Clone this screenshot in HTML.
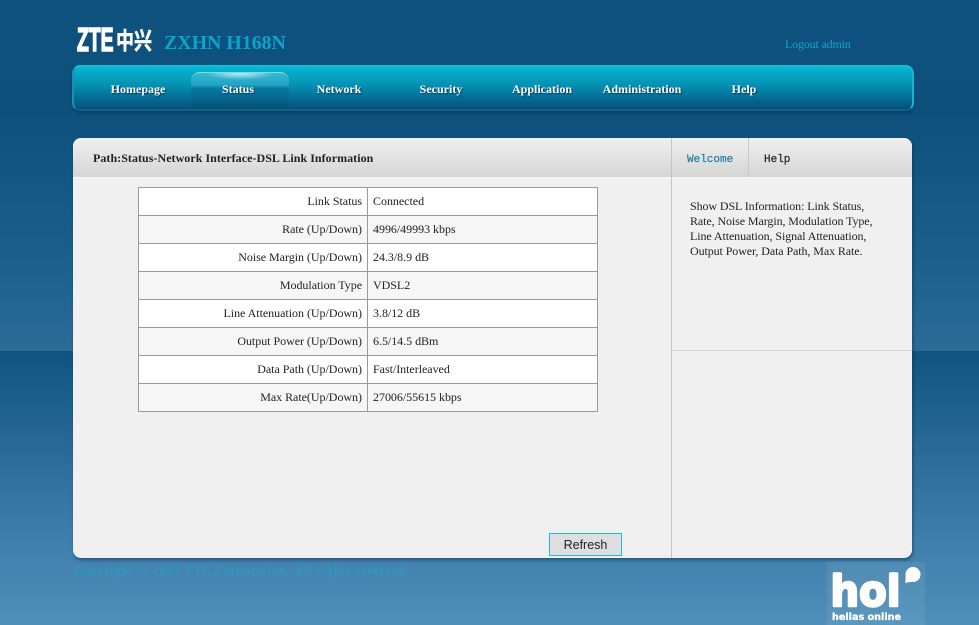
<!DOCTYPE html>
<html><head><meta charset="utf-8"><title>ZXHN H168N</title>
<style>
html,body{margin:0;padding:0}
body{width:979px;height:625px;overflow:hidden;position:relative;font-family:"Liberation Serif",serif;background:#0f5380}
.a{position:absolute}
#bg1{left:0;top:0;width:979px;height:351px;background:linear-gradient(#0f527f 0,#0e507c 110px,#1a5e8b 250px,#2b6c97 350px)}
#bg2{left:0;top:351px;width:979px;height:274px;background:linear-gradient(#0f5481 0,#2a6a97 100px,#3f7fab 190px,#4f8eb9 274px)}
#nav{left:72px;top:65px;width:838px;height:42px;border:2px solid #12b6d5;border-bottom:2px solid #11618c;border-left-color:#1592b4;border-top-color:#0cc0da;border-radius:8px;background:linear-gradient(#06b6d2 0,#0590b2 18px,#056a95 32px,#05507c 42px);box-shadow:0 2px 3px rgba(4,45,75,.55)}
#act{left:191px;top:72px;width:98px;height:36px;border-radius:9px 9px 0 0;background:radial-gradient(ellipse 34px 7px at 50% 0,#c4eff6 0,rgba(130,220,235,0) 100%),linear-gradient(#38b8d2 0,#22a4c2 12px,#067ca1 15px,#054f7a 36px);border-top:1px solid #7fd8e8;box-sizing:border-box}
.m{top:81px;color:#fff;font-weight:bold;font-size:12px;line-height:16px;text-align:center;text-shadow:1px 1px 1px #033a58;white-space:nowrap}
#panel{left:73px;top:138px;width:839px;height:420px;background:#f0f0f0;border-radius:8px;box-shadow:1px 2px 3px rgba(5,40,70,.5);overflow:hidden}
#hd{left:0;top:0;width:839px;height:39px;background:linear-gradient(#f0f0f0,#d5d5d5)}
table{position:absolute;left:138px;top:187px;width:460px;height:225px;border-collapse:collapse;font-size:12px;color:#222;table-layout:fixed;letter-spacing:-.03px}
td{border:1px solid #9a9a9a;padding:0 5px 2px;height:25px;line-height:14px}
td:first-child{text-align:right;width:218px}
tr:nth-child(odd) td{background:#fff}
tr:nth-child(even) td{background:#f6f6f6}
</style></head><body>
<div class="a" id="bg1"></div><div class="a" id="bg2"></div>

<div class="a" style="left:77px;top:21px;width:62px;font:bold 33px/38px 'Liberation Sans',sans-serif;color:#fff;-webkit-text-stroke:1.6px #fff;transform:scaleX(.585);transform-origin:0 0;white-space:nowrap">ZTE</div>
<div class="a" style="left:116px;top:26px;font:bold 18px/28px 'Noto Sans CJK SC',sans-serif;color:#fff;-webkit-text-stroke:.4px #fff;transform:scaleY(1.3);white-space:nowrap">中兴</div>
<div class="a" style="left:164px;top:31px;font:bold 20px/24px 'Liberation Serif',serif;color:#0aa5c9;letter-spacing:-.1px;white-space:nowrap">ZXHN H168N</div>
<div class="a" style="left:785px;top:36px;font-size:12px;line-height:16px;color:#12a5c8;letter-spacing:-.17px;white-space:nowrap">Logout admin</div>

<div class="a" id="nav"></div>
<div class="a" id="act"></div>
<div class="a m" style="left:88px;width:100px">Homepage</div>
<div class="a m" style="left:188px;width:100px">Status</div>
<div class="a m" style="left:289px;width:100px">Network</div>
<div class="a m" style="left:391px;width:100px">Security</div>
<div class="a m" style="left:492px;width:100px">Application</div>
<div class="a m" style="left:592px;width:100px">Administration</div>
<div class="a m" style="left:694px;width:100px">Help</div>

<div class="a" id="panel">
  <div class="a" id="hd"></div>
  <div class="a" style="left:0;top:39px;width:839px;height:1px;background:#f7f7f7"></div>
  <div class="a" style="left:598px;top:0;width:1px;height:420px;background:#c4c4c4"></div>
  <div class="a" style="left:675px;top:0;width:1px;height:39px;background:#c9c9c9"></div>
  <div class="a" style="left:599px;top:212px;width:240px;height:1px;background:#d6d6d6"></div>
</div>
<div class="a" style="left:93px;top:150px;font-weight:bold;font-size:12px;line-height:16px;color:#222;white-space:nowrap;letter-spacing:.04px">Path:Status-Network Interface-DSL Link Information</div>
<div class="a" style="left:687px;top:151px;font:11px/14px 'Liberation Mono',monospace;color:#1f7f9f;-webkit-text-stroke:.2px #1f7f9f;white-space:nowrap;transform:translateY(2px)">Welcome</div>
<div class="a" style="left:764px;top:151px;font:11px/14px 'Liberation Mono',monospace;color:#222;-webkit-text-stroke:.2px #222;white-space:nowrap;transform:translateY(2px)">Help</div>
<div class="a" style="left:690px;top:199px;width:205px;font-size:12px;line-height:15px;color:#222;letter-spacing:-.09px">Show DSL Information: Link Status,<br>Rate, Noise Margin, Modulation Type,<br>Line Attenuation, Signal Attenuation,<br>Output Power, Data Path, Max Rate.</div>

<table>
<tr><td>Link Status</td><td>Connected</td></tr>
<tr><td>Rate (Up/Down)</td><td>4996/49993 kbps</td></tr>
<tr><td>Noise Margin (Up/Down)</td><td>24.3/8.9 dB</td></tr>
<tr><td>Modulation Type</td><td>VDSL2</td></tr>
<tr><td>Line Attenuation (Up/Down)</td><td>3.8/12 dB</td></tr>
<tr><td>Output Power (Up/Down)</td><td>6.5/14.5 dBm</td></tr>
<tr><td>Data Path (Up/Down)</td><td>Fast/Interleaved</td></tr>
<tr><td>Max Rate(Up/Down)</td><td>27006/55615 kbps</td></tr>
</table>

<div class="a" style="left:549px;top:533px;width:73px;height:23px;box-sizing:border-box;border:1px solid #1fbcd6;background:#dedede;font:12.5px/23px 'Liberation Sans',sans-serif;color:#222;text-align:center">Refresh</div>

<div class="a" style="left:74px;top:562px;font-size:12px;line-height:16px;color:#1fa3cc;letter-spacing:1.2px;white-space:nowrap">Copyright © 2013 ZTE Corporation. All rights reserved.</div>

<svg class="a" style="left:827px;top:562px" width="98" height="63" viewBox="0 0 98 63">
  <rect x="0" y="0" width="98" height="63" fill="#fff" opacity=".07"/>
  <text x="3.500" y="44" font-family="DejaVu Sans" font-weight="bold" font-size="43" fill="#fff" stroke="#fff" stroke-width="2.5" stroke-linejoin="round" textLength="70" lengthAdjust="spacingAndGlyphs">hol</text>
  <path d="M78.500 12.500a7.500 7.500 0 1 1 7 7.500c-2.500 0-5 .2-7.500 1 1-2.500 .5-5.500 .5-8.500z" fill="#fff"/>
  <text x="5" y="58" font-family="DejaVu Sans" font-weight="bold" font-size="10" fill="#fff" stroke="#fff" stroke-width=".3" textLength="69" lengthAdjust="spacingAndGlyphs">hellas online</text>
</svg>
</body></html>
